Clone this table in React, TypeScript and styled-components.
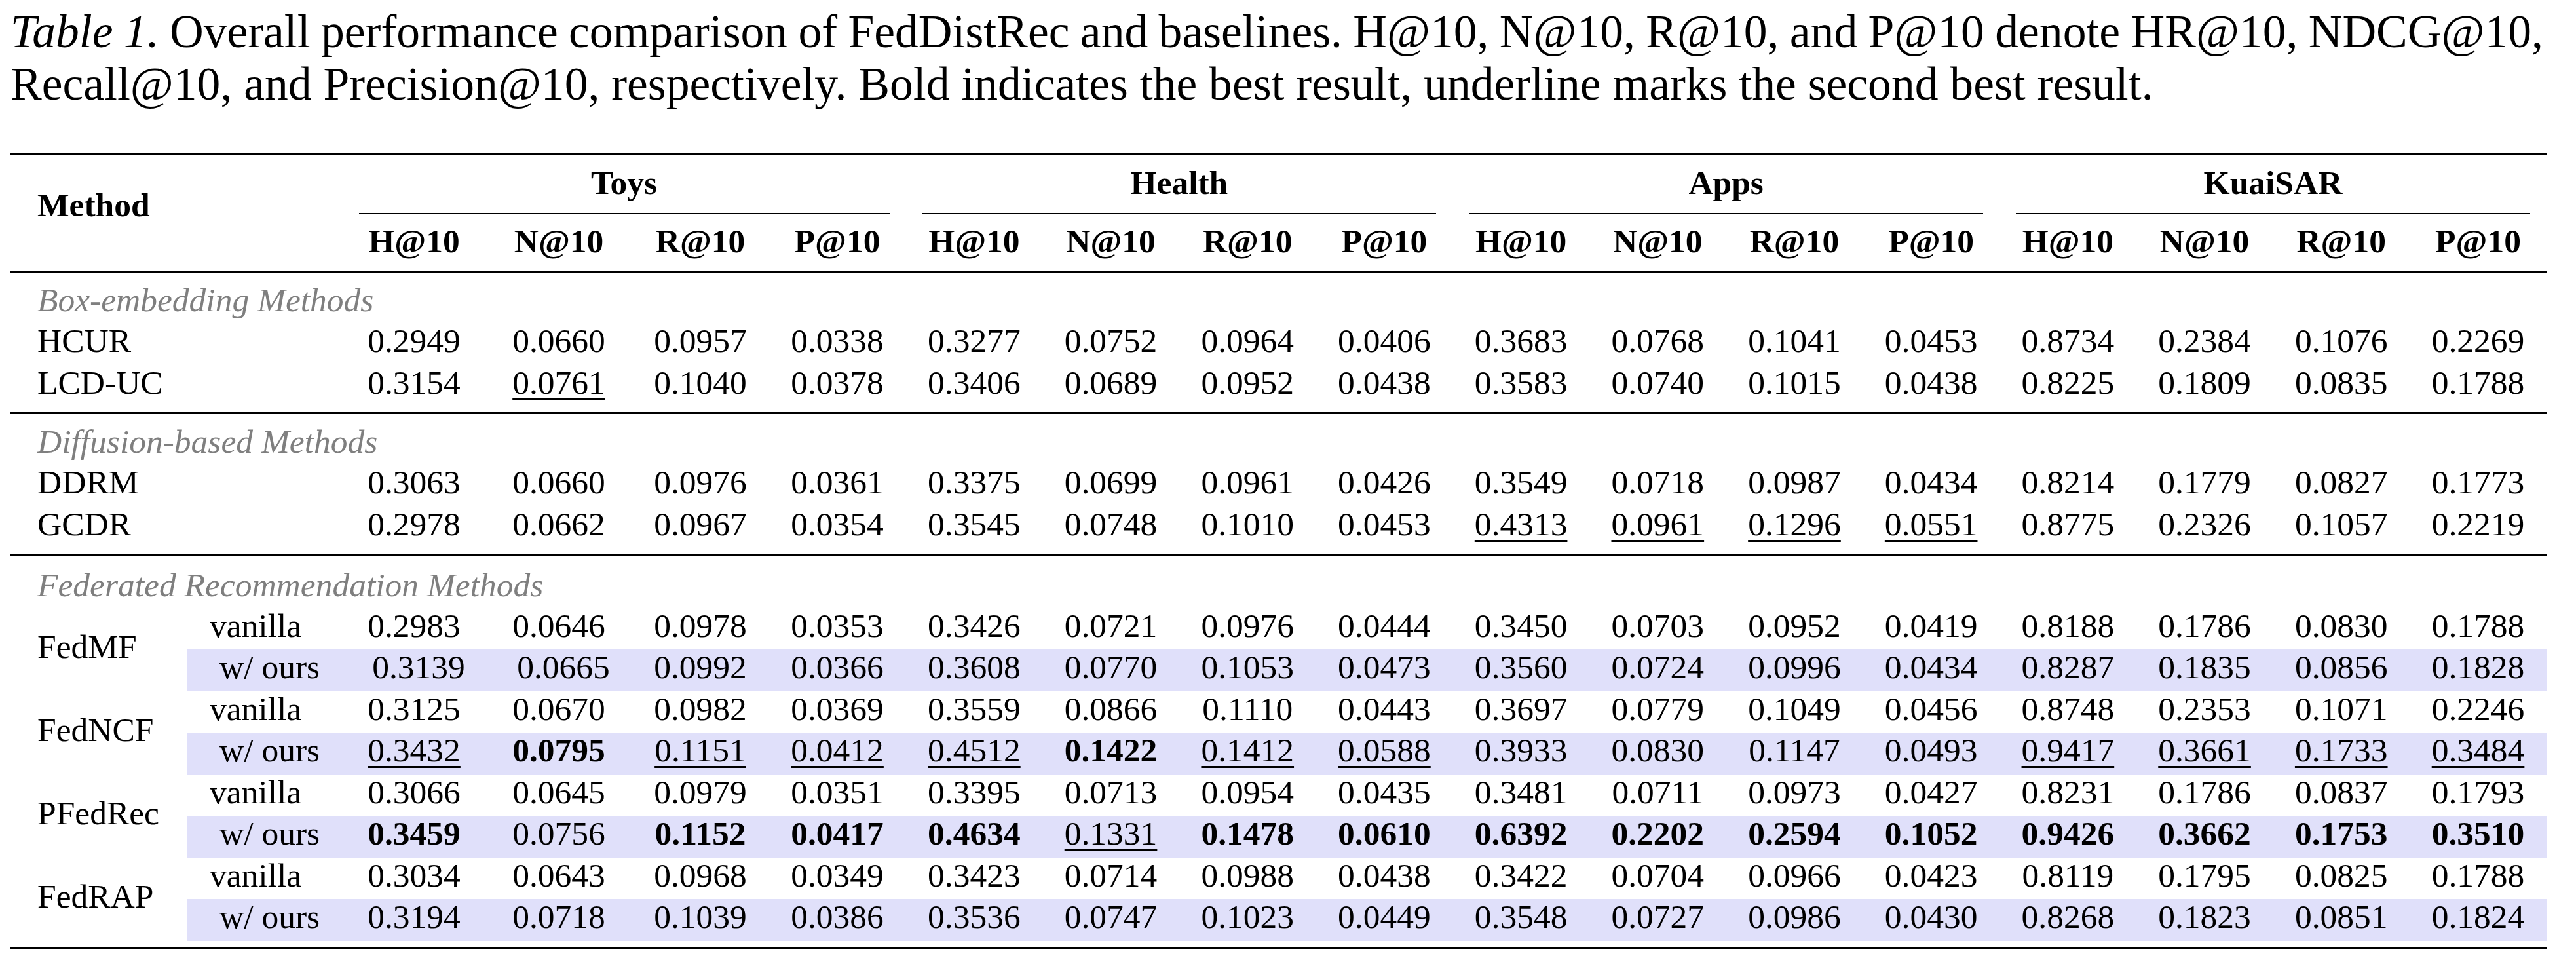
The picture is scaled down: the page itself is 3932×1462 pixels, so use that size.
import styled, { createGlobalStyle } from "styled-components";

// "*" marks the best result (bold), "_" the second best (underline)
const groups = ["Toys", "Health", "Apps", "KuaiSAR"];
const metrics = ["H@10", "N@10", "R@10", "P@10"];

const baselines = [
    {
        title: "Box-embedding Methods",
        rows: [
            { name: "HCUR", values: "0.2949 0.0660 0.0957 0.0338 0.3277 0.0752 0.0964 0.0406 0.3683 0.0768 0.1041 0.0453 0.8734 0.2384 0.1076 0.2269" },
            { name: "LCD-UC", values: "0.3154 _0.0761 0.1040 0.0378 0.3406 0.0689 0.0952 0.0438 0.3583 0.0740 0.1015 0.0438 0.8225 0.1809 0.0835 0.1788" },
        ],
    },
    {
        title: "Diffusion-based Methods",
        rows: [
            { name: "DDRM", values: "0.3063 0.0660 0.0976 0.0361 0.3375 0.0699 0.0961 0.0426 0.3549 0.0718 0.0987 0.0434 0.8214 0.1779 0.0827 0.1773" },
            { name: "GCDR", values: "0.2978 0.0662 0.0967 0.0354 0.3545 0.0748 0.1010 0.0453 _0.4313 _0.0961 _0.1296 _0.0551 0.8775 0.2326 0.1057 0.2219" },
        ],
    },
];

const federated = [
    {
        name: "FedMF",
        vanilla: "0.2983 0.0646 0.0978 0.0353 0.3426 0.0721 0.0976 0.0444 0.3450 0.0703 0.0952 0.0419 0.8188 0.1786 0.0830 0.1788",
        ours: "0.3139 0.0665 0.0992 0.0366 0.3608 0.0770 0.1053 0.0473 0.3560 0.0724 0.0996 0.0434 0.8287 0.1835 0.0856 0.1828",
        nudge: 2,
    },
    {
        name: "FedNCF",
        vanilla: "0.3125 0.0670 0.0982 0.0369 0.3559 0.0866 0.1110 0.0443 0.3697 0.0779 0.1049 0.0456 0.8748 0.2353 0.1071 0.2246",
        ours: "_0.3432 *0.0795 _0.1151 _0.0412 _0.4512 *0.1422 _0.1412 _0.0588 0.3933 0.0830 0.1147 0.0493 _0.9417 _0.3661 _0.1733 _0.3484",
        nudge: 0,
    },
    {
        name: "PFedRec",
        vanilla: "0.3066 0.0645 0.0979 0.0351 0.3395 0.0713 0.0954 0.0435 0.3481 0.0711 0.0973 0.0427 0.8231 0.1786 0.0837 0.1793",
        ours: "*0.3459 0.0756 *0.1152 *0.0417 *0.4634 _0.1331 *0.1478 *0.0610 *0.6392 *0.2202 *0.2594 *0.1052 *0.9426 *0.3662 *0.1753 *0.3510",
        nudge: 0,
    },
    {
        name: "FedRAP",
        vanilla: "0.3034 0.0643 0.0968 0.0349 0.3423 0.0714 0.0988 0.0438 0.3422 0.0704 0.0966 0.0423 0.8119 0.1795 0.0825 0.1788",
        ours: "0.3194 0.0718 0.1039 0.0386 0.3536 0.0747 0.1023 0.0449 0.3548 0.0727 0.0986 0.0430 0.8268 0.1823 0.0851 0.1824",
        nudge: 0,
    },
];

const colWidths = [270, 236.5, 219, 223, 209, 209, ...Array(12).fill(208.7)];
const SPAN = colWidths.length;

function Values({ values, band, nudge = 0 }: { values: string; band?: boolean; nudge?: number }) {
    return (
        <>
            {values.split(" ").map((v, i) => (
                <ValueCell key={i} $band={band} $shift={i < nudge}>
                    <Num $bold={v[0] === "*"} $under={v[0] === "_"}>
                        {v.replace(/^[*_]/, "")}
                    </Num>
                </ValueCell>
            ))}
        </>
    );
}

function RuleRow({ weight, above = 0, below = 0 }: { weight: number; above?: number; below?: number }) {
    return (
        <tr>
            <RuleCell colSpan={SPAN}>
                <Rule $weight={weight} $above={above} $below={below} />
            </RuleCell>
        </tr>
    );
}

export default function App() {
    return (
        <>
            <GlobalStyle />
            <Page>
                <Caption>
                    <CaptionLine $justify>
                        <em>Table 1.</em> Overall performance comparison of FedDistRec and baselines. H@10, N@10, R@10,
                        and P@10 denote HR@10, NDCG@10,
                    </CaptionLine>
                    <CaptionLine>
                        Recall@10, and Precision@10, respectively. Bold indicates the best result, underline marks the
                        second best result.
                    </CaptionLine>
                </Caption>

                <Table>
                    <colgroup>
                        {colWidths.map((w, i) => (
                            <col key={i} style={{ width: w }} />
                        ))}
                    </colgroup>
                    <thead>
                        <RuleRow weight={4} />
                        <tr>
                            <MethodHead rowSpan={2}>Method</MethodHead>
                            <HeadBlank rowSpan={2} />
                            {groups.map((g) => (
                                <GroupCell key={g} colSpan={4}>
                                    <GroupLabel>{g}</GroupLabel>
                                </GroupCell>
                            ))}
                        </tr>
                        <tr>
                            {groups.map((g) =>
                                metrics.map((m) => <MetricCell key={g + m}>{m}</MetricCell>)
                            )}
                        </tr>
                        <RuleRow weight={3} below={15} />
                    </thead>
                    <tbody>
                        {baselines.map((section) => (
                            <Section key={section.title} title={section.title}>
                                {section.rows.map((r) => (
                                    <tr key={r.name}>
                                        <NameCell colSpan={2}>{r.name}</NameCell>
                                        <Values values={r.values} />
                                    </tr>
                                ))}
                            </Section>
                        ))}
                        <tr>
                            <SectionCell colSpan={SPAN}>Federated Recommendation Methods</SectionCell>
                        </tr>
                        {federated.map((f) => (
                            <FedGroup key={f.name} {...f} />
                        ))}
                        <RuleRow weight={4} above={9} />
                    </tbody>
                </Table>
            </Page>
        </>
    );
}

function Section({ title, children }: { title: string; children: React.ReactNode }) {
    return (
        <>
            <tr>
                <SectionCell colSpan={SPAN}>{title}</SectionCell>
            </tr>
            {children}
            <RuleRow weight={3} above={8} below={title.startsWith("Diffusion") ? 18 : 15} />
        </>
    );
}

function FedGroup({ name, vanilla, ours, nudge }: { name: string; vanilla: string; ours: string; nudge: number }) {
    return (
        <>
            <tr>
                <LabelCell rowSpan={2}>{name}</LabelCell>
                <VariantCell>vanilla</VariantCell>
                <Values values={vanilla} />
            </tr>
            <tr>
                <VariantCell $band $indent>
                    w/ ours
                </VariantCell>
                <Values values={ours} band nudge={nudge} />
            </tr>
        </>
    );
}

const GlobalStyle = createGlobalStyle`
    html, body {
        margin: 0;
        padding: 0;
        background: #ffffff;
    }
    body {
        font-family: "Liberation Serif", "Times New Roman", serif;
        color: #000000;
    }
`;

const Page = styled.div`
    width: 3932px;
    padding-top: 8px;
`;

const Caption = styled.div`
    margin: 0 50px 0 16px;
    font-size: 71.6px;
    line-height: 80px;

    em {
        font-style: italic;
    }
`;

// first line is set tight and then stretched to the full measure, like LaTeX
const CaptionLine = styled.div<{ $justify?: boolean }>`
    white-space: nowrap;
    text-align: left;

    ${(p) =>
        p.$justify &&
        `
        white-space: normal;
        word-spacing: -8px;
        text-align: justify;
        text-align-last: justify;
    `}
`;

const Table = styled.table`
    margin: 65px 0 0 16px;
    width: 3871px;
    table-layout: fixed;
    border-spacing: 0;
    border-collapse: separate;
    font-size: 51.5px;
    line-height: 54px;

    td,
    th {
        padding: 0;
        white-space: nowrap;
        vertical-align: top;
    }
`;

const RuleCell = styled.td`
    line-height: 0;
`;

const Rule = styled.div<{ $weight: number; $above: number; $below: number }>`
    height: ${(p) => p.$weight}px;
    margin: ${(p) => p.$above}px 0 ${(p) => p.$below}px;
    background: #000000;
`;

const MethodHead = styled.th`
    text-align: left;
    font-weight: bold;
    padding-left: 41px !important;
    padding-top: 48.6px !important;
`;

const HeadBlank = styled.th``;

const GroupCell = styled.th`
    font-weight: bold;
    text-align: center;
`;

const GroupLabel = styled.div`
    margin: 0 25px;
    padding: 14.6px 0 19.4px;
    border-bottom: 2px solid #000000;
`;

const MetricCell = styled.th`
    font-weight: bold;
    text-align: center;
    height: 86px;
    padding-top: 13.6px !important;
    box-sizing: border-box;
`;

const SectionCell = styled.td`
    height: 62px;
    padding-left: 41px !important;
    font-style: italic;
    color: #7f7f7f;
`;

const NameCell = styled.td`
    height: 64px;
    padding-left: 41px !important;
`;

const LabelCell = styled.td`
    padding-left: 41px !important;
    vertical-align: middle !important;
    padding-bottom: 8px !important;
`;

const VariantCell = styled.td<{ $band?: boolean; $indent?: boolean }>`
    height: 63.5px;
    padding-left: ${(p) => (p.$indent ? 49 : 34)}px !important;
    background: ${(p) => (p.$band ? "#e0e0fa" : "transparent")};
`;

const ValueCell = styled.td<{ $band?: boolean; $shift?: boolean }>`
    text-align: center;
    background: ${(p) => (p.$band ? "#e0e0fa" : "transparent")};
    padding-left: ${(p) => (p.$shift ? 14 : 0)}px !important;
`;

const Num = styled.span<{ $bold: boolean; $under: boolean }>`
    font-weight: ${(p) => (p.$bold ? "bold" : "normal")};
    text-decoration: ${(p) => (p.$under ? "underline" : "none")};
    text-decoration-thickness: 3px;
    text-underline-offset: 7px;
`;
